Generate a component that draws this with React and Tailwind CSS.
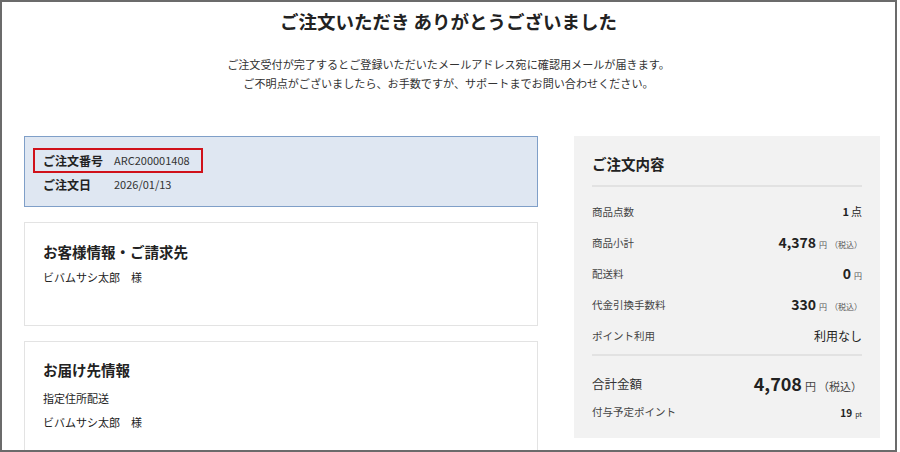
const font = { fontFamily: '"Noto Sans CJK JP", "Noto Sans", sans-serif' };

function SummaryRow({ label, children }) {
  return (
    <div className="flex h-[31px] items-center justify-between">
      <span className="text-[10.5px] text-[#444]">{label}</span>
      <span className="flex items-baseline text-[#222]">{children}</span>
    </div>
  );
}

function Yen({ amount }) {
  return (
    <>
      <span className="text-[14px] font-bold leading-none">{amount}</span>
      <span className="ml-[3px] text-[8px] text-[#555]">円</span>
      <span className="ml-[3px] text-[8px] text-[#555]">（税込）</span>
    </>
  );
}

export default function App() {
  return (
    <div
      className="h-[452px] w-[897px] overflow-hidden border-2 border-[#6b6b6b] bg-white text-[#222]"
      style={font}
    >
      <h1 className="mt-[5px] text-center text-[18.5px] font-bold leading-[28px]">
        ご注文いただき ありがとうございました
      </h1>
      <div className="mt-[20px] text-center text-[11.1px] leading-[19px] text-[#333]">
        <p>ご注文受付が完了するとご登録いただいたメールアドレス宛に確認用メールが届きます。</p>
        <p>ご不明点がございましたら、お手数ですが、サポートまでお問い合わせください。</p>
      </div>

      <div className="ml-[22px] mt-[43px] flex w-[856px] gap-[36px]">
        <div className="flex w-[514px] flex-col gap-[15px]">
          <div className="border border-[#7f9fc8] bg-[#dfe7f2] px-[8px] pb-[10px] pt-[11px]">
            <div className="flex h-[25px] w-[170px] items-center border-2 border-[#d0121b] px-[8px]">
              <span className="w-[71px] text-[12px] font-bold">ご注文番号</span>
              <span className="text-[11px] text-[#333]">ARC200001408</span>
            </div>
            <div className="flex h-[23px] items-center pl-[10px]">
              <span className="w-[71px] text-[12px] font-bold">ご注文日</span>
              <span className="text-[11px] text-[#333]">2026/01/13</span>
            </div>
          </div>

          <div className="h-[104px] border border-[#e3e3e3] bg-white px-[18px] pt-[18px]">
            <h2 className="text-[14.5px] font-bold leading-[22px]">お客様情報・ご請求先</h2>
            <p className="mt-[5px] text-[11px] leading-[18px]">ビバムサシ太郎　様</p>
          </div>

          <div className="h-[140px] border border-[#e3e3e3] bg-white px-[18px] pt-[17px]">
            <h2 className="text-[14.5px] font-bold leading-[22px]">お届け先情報</h2>
            <p className="mt-[8px] text-[11px] leading-[18px]">指定住所配送</p>
            <p className="mt-[6px] text-[11px] leading-[18px]">ビバムサシ太郎　様</p>
          </div>
        </div>

        <div className="h-[302px] w-[306px] bg-[#f2f2f2] px-[18px] pt-[17px]">
          <h2 className="text-[14.5px] font-bold leading-[22px]">ご注文内容</h2>
          <div className="mt-[10px] h-[2px] bg-[#e2e2e2]" />
          <div className="mt-[9px]">
            <SummaryRow label="商品点数">
              <span className="text-[11px] font-bold">1</span>
              <span className="ml-[2px] text-[11px]">点</span>
            </SummaryRow>
            <SummaryRow label="商品小計">
              <Yen amount="4,378" />
            </SummaryRow>
            <SummaryRow label="配送料">
              <span className="text-[14px] font-bold leading-none">0</span>
              <span className="ml-[3px] text-[8px] text-[#555]">円</span>
            </SummaryRow>
            <SummaryRow label="代金引換手数料">
              <Yen amount="330" />
            </SummaryRow>
            <SummaryRow label="ポイント利用">
              <span className="text-[12px]">利用なし</span>
            </SummaryRow>
          </div>
          <div className="mt-[3px] h-[2px] bg-[#e2e2e2]" />
          <div className="mt-[12px] flex h-[32px] items-center justify-between">
            <span className="text-[12.5px] text-[#333]">合計金額</span>
            <span className="flex items-baseline">
              <span className="text-[18px] font-bold leading-none">4,708</span>
              <span className="ml-[3px] text-[11px] text-[#444]">円</span>
              <span className="ml-[2px] text-[11px] text-[#444]">（税込）</span>
            </span>
          </div>
          <div className="flex h-[24px] items-center justify-between">
            <span className="text-[10.5px] text-[#444]">付与予定ポイント</span>
            <span className="flex items-baseline">
              <span className="text-[10px] font-bold">19</span>
              <span className="ml-[3px] text-[7px]">pt</span>
            </span>
          </div>
        </div>
      </div>
    </div>
  );
}
